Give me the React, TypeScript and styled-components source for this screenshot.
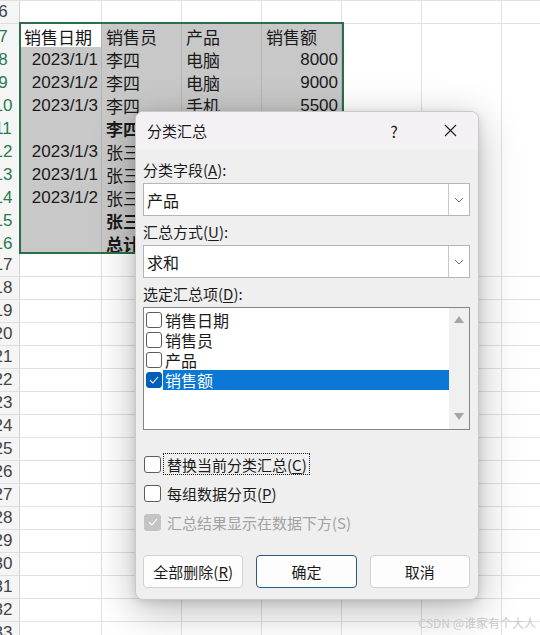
import React from 'react';
import styled, {createGlobalStyle} from 'styled-components';

const GlobalStyle = createGlobalStyle`
  html, body {
    margin: 0;
    padding: 0;
    background: #ffffff;
    overflow: hidden;
  }
`;

const CJK = `"Liberation Sans", "Noto Sans CJK SC", sans-serif`;
const UI = `"Noto Sans CJK SC", "Liberation Sans", sans-serif`;

const Page = styled.div`
  position: relative;
  width: 540px;
  height: 635px;
  overflow: hidden;
  background: #ffffff;
`;

// ---------- sheet ----------

const Sheet = styled.div`
  display: flex;
  flex-direction: column;
  margin-left: -13px;
  border-top: 1px solid #e1e1e1;
  font-family: ${CJK};
  font-size: 17px;
  color: #1a1a1a;
`;

const SheetRow = styled.div`
  display: grid;
  grid-template-columns: 33px 82px repeat(5, 80px) 60px;
  height: 23px;
`;

const RowHead = styled.div<{$active?: boolean}>`
  box-sizing: border-box;
  display: flex;
  align-items: center;
  justify-content: center;
  background: #f5f5f5;
  border-right: 1px solid #d0d0d0;
  border-bottom: 1px solid #dedede;
  color: ${(p) => (p.$active ? '#2a7a4e' : '#444444')};
  font-size: 17px;
`;

const Cell = styled.div<{$sel?: boolean; $num?: boolean; $bold?: boolean}>`
  box-sizing: border-box;
  display: flex;
  align-items: center;
  justify-content: ${(p) => (p.$num ? 'flex-end' : 'flex-start')};
  padding: 0 3px 0 4px;
  white-space: nowrap;
  overflow: visible;
  background: ${(p) => (p.$sel ? '#c8c8c8' : '#ffffff')};
  border-right: 1px solid ${(p) => (p.$sel ? '#b4b4b4' : '#e1e1e1')};
  border-bottom: 1px solid ${(p) => (p.$sel ? '#b4b4b4' : '#e1e1e1')};
  font-weight: ${(p) => (p.$bold ? 700 : 400)};
`;

const ActiveCell = styled(Cell)`
  background: #ffffff;
`;

const SelectionFrame = styled.div`
  position: absolute;
  left: 19px;
  top: 22px;
  width: 321px;
  height: 228px;
  border: 2px solid #2b6e48;
  pointer-events: none;
`;

// ---------- dialog ----------

const Dialog = styled.div`
  position: absolute;
  left: 135px;
  top: 111px;
  width: 344px;
  box-sizing: border-box;
  border: 1px solid #c9c9c9;
  border-radius: 8px;
  overflow: hidden;
  background: #efefef;
  box-shadow: 0 10px 40px rgba(0, 0, 0, 0.28), 0 2px 8px rgba(0, 0, 0, 0.12);
  font-family: ${UI};
  font-size: 15px;
  color: #1b1b1b;
`;

const TitleBar = styled.div`
  display: flex;
  align-items: center;
  height: 37px;
  padding: 0 0 0 11px;
  background: #f4f1f5;
`;

const Title = styled.div`
  flex: 1;
  font-size: 15px;
`;

const TitleButton = styled.div`
  display: flex;
  align-items: center;
  justify-content: center;
  width: 56px;
  height: 37px;
  font-size: 16px;
  color: #1b1b1b;
`;

const Body = styled.div`
  display: flex;
  flex-direction: column;
  padding: 11px 8px 11px 7px;
`;

const Field = styled.div<{$gap?: number}>`
  display: flex;
  flex-direction: column;
  gap: 3px;
  margin-top: ${(p) => p.$gap ?? 0}px;
`;

const Label = styled.div`
  height: 20px;
  line-height: 20px;
`;

const Key = styled.span`
  text-decoration: underline;
  text-underline-offset: 2px;
`;

const Combo = styled.div`
  display: flex;
  height: 33px;
  box-sizing: border-box;
  border: 1px solid #b5b5b5;
  background: #ffffff;
`;

const ComboText = styled.div`
  flex: 1;
  display: flex;
  align-items: center;
  padding-left: 3px;
  font-size: 16px;
`;

const ComboArrow = styled.div`
  width: 20px;
  display: flex;
  align-items: center;
  justify-content: center;
  border-left: 1px solid #c8c8c8;
`;

const ListBox = styled.div`
  display: flex;
  height: 123px;
  box-sizing: border-box;
  border: 1px solid #858585;
  background: #ffffff;
`;

const ListItems = styled.div`
  flex: 1;
  display: flex;
  flex-direction: column;
  padding: 2px 0 0 2px;
`;

const ListItem = styled.div`
  display: flex;
  align-items: center;
  height: 20px;
`;

const ItemText = styled.div<{$selected?: boolean}>`
  flex: 1;
  height: 20px;
  line-height: 20px;
  margin-left: 1px;
  padding-left: 2px;
  background: ${(p) => (p.$selected ? '#0a78d4' : 'transparent')};
  color: ${(p) => (p.$selected ? '#ffffff' : '#1b1b1b')};
  font-size: 16px;
`;

const ScrollBar = styled.div`
  width: 20px;
  display: flex;
  flex-direction: column;
  justify-content: space-between;
  align-items: center;
  padding: 8px 0 9px;
  background: #f0f0f0;
`;

const Box = styled.div<{$checked?: boolean; $disabled?: boolean; $size?: number}>`
  box-sizing: border-box;
  width: ${(p) => p.$size ?? 16}px;
  height: ${(p) => p.$size ?? 16}px;
  flex-shrink: 0;
  border-radius: 3px;
  display: flex;
  align-items: center;
  justify-content: center;
  border: 1px solid
    ${(p) => (p.$disabled ? '#c4c4c4' : p.$checked ? '#005fb8' : '#5c5c5c')};
  background: ${(p) => (p.$disabled ? '#c4c4c4' : p.$checked ? '#005fb8' : '#ffffff')};
`;

const CheckRow = styled.div<{$gap: number}>`
  display: flex;
  align-items: center;
  height: 22px;
  margin-top: ${(p) => p.$gap}px;
  padding-left: 1px;
`;

const CheckLabel = styled.div<{$focus?: boolean; $disabled?: boolean}>`
  margin-left: 2px;
  padding: 0 2px 0 3px;
  height: 22px;
  line-height: 22px;
  box-sizing: border-box;
  border: 1px dotted ${(p) => (p.$focus ? '#1b1b1b' : 'transparent')};
  color: ${(p) => (p.$disabled ? '#a2a2a2' : '#1b1b1b')};
`;

const Buttons = styled.div`
  display: grid;
  grid-template-columns: repeat(3, 1fr);
  gap: 13px;
  margin-top: 22px;
`;

const Button = styled.div<{$primary?: boolean}>`
  height: 33px;
  box-sizing: border-box;
  display: flex;
  align-items: center;
  justify-content: center;
  border-radius: 4px;
  background: #fdfdfd;
  border: 1px solid ${(p) => (p.$primary ? '#2c5b82' : '#d2d2d2')};
  font-size: 15px;
`;

const Watermark = styled.div`
  position: absolute;
  right: 4px;
  bottom: 4px;
  font-family: ${UI};
  font-size: 12px;
  color: #c9c9c9;
  letter-spacing: 0;
`;

// ---------- icons ----------

const Chevron = () => (
  <svg width="10" height="6" viewBox="0 0 10 6">
    <path d="M1 1 L5 5 L9 1" fill="none" stroke="#6b6b6b" strokeWidth="1" />
  </svg>
);

const Tick = ({color = '#ffffff'}: {color?: string}) => (
  <svg width="10" height="8" viewBox="0 0 10 8">
    <path d="M1 4.2 L3.8 7 L9 1" fill="none" stroke={color} strokeWidth="1.1" />
  </svg>
);

const CloseIcon = () => (
  <svg width="13" height="13" viewBox="0 0 13 13">
    <path d="M1 1 L12 12 M12 1 L1 12" stroke="#1b1b1b" strokeWidth="1.1" />
  </svg>
);

const Triangle = ({down}: {down?: boolean}) => (
  <svg width="10" height="7" viewBox="0 0 10 7">
    <path d={down ? 'M0 0 H10 L5 7 Z' : 'M0 7 H10 L5 0 Z'} fill="#a6a6a6" />
  </svg>
);

// ---------- data ----------

type Row = {n: number; a?: string; b?: string; c?: string; d?: string; bold?: boolean};

const rows: Row[] = [
  {n: 6},
  {n: 7, a: '销售日期', b: '销售员', c: '产品', d: '销售额'},
  {n: 8, a: '2023/1/1', b: '李四', c: '电脑', d: '8000'},
  {n: 9, a: '2023/1/2', b: '李四', c: '电脑', d: '9000'},
  {n: 10, a: '2023/1/3', b: '李四', c: '手机', d: '5500'},
  {n: 11, b: '李四 汇总', d: '22500', bold: true},
  {n: 12, a: '2023/1/3', b: '张三', c: '电脑', d: '7000'},
  {n: 13, a: '2023/1/1', b: '张三', c: '手机', d: '4000'},
  {n: 14, a: '2023/1/2', b: '张三', c: '手机', d: '4500'},
  {n: 15, b: '张三 汇总', d: '15500', bold: true},
  {n: 16, b: '总计', d: '38000', bold: true},
];
for (let n = 17; n <= 34; n++) rows.push({n});

const listItems = ['销售日期', '销售员', '产品', '销售额'];

const SheetView: React.FC = () => (
  <Sheet>
    {rows.map((r) => {
      const sel = r.n >= 7 && r.n <= 16;
      const isNumA = !!r.a && /\d/.test(r.a);
      return (
        <SheetRow key={r.n}>
          <RowHead $active={sel}>{r.n}</RowHead>
          {r.n === 7 ? (
            <ActiveCell $sel>{r.a}</ActiveCell>
          ) : (
            <Cell $sel={sel} $num={isNumA}>
              {r.a}
            </Cell>
          )}
          <Cell $sel={sel} $bold={r.bold}>
            {r.b}
          </Cell>
          <Cell $sel={sel}>{r.c}</Cell>
          <Cell $sel={sel} $num={r.n !== 7} $bold={r.bold}>
            {r.d}
          </Cell>
          <Cell />
          <Cell />
          <Cell />
        </SheetRow>
      );
    })}
  </Sheet>
);

const App: React.FC = () => (
  <Page>
    <GlobalStyle />
    <SheetView />
    <SelectionFrame />

    <Dialog>
      <TitleBar>
        <Title>分类汇总</Title>
        <TitleButton>?</TitleButton>
        <TitleButton>
          <CloseIcon />
        </TitleButton>
      </TitleBar>

      <Body>
        <Field>
          <Label>
            分类字段(<Key>A</Key>):
          </Label>
          <Combo>
            <ComboText>产品</ComboText>
            <ComboArrow>
              <Chevron />
            </ComboArrow>
          </Combo>
        </Field>

        <Field $gap={6}>
          <Label>
            汇总方式(<Key>U</Key>):
          </Label>
          <Combo>
            <ComboText>求和</ComboText>
            <ComboArrow>
              <Chevron />
            </ComboArrow>
          </Combo>
        </Field>

        <Field $gap={6}>
          <Label>
            选定汇总项(<Key>D</Key>):
          </Label>
          <ListBox>
            <ListItems>
              {listItems.map((item) => {
                const checked = item === '销售额';
                return (
                  <ListItem key={item}>
                    <Box $checked={checked}>{checked && <Tick />}</Box>
                    <ItemText $selected={checked}>{item}</ItemText>
                  </ListItem>
                );
              })}
            </ListItems>
            <ScrollBar>
              <Triangle />
              <Triangle down />
            </ScrollBar>
          </ListBox>
        </Field>

        <CheckRow $gap={23}>
          <Box $size={17} />
          <CheckLabel $focus>
            替换当前分类汇总(<Key>C</Key>)
          </CheckLabel>
        </CheckRow>
        <CheckRow $gap={7}>
          <Box $size={17} />
          <CheckLabel>
            每组数据分页(<Key>P</Key>)
          </CheckLabel>
        </CheckRow>
        <CheckRow $gap={7}>
          <Box $size={17} $disabled>
            <Tick />
          </Box>
          <CheckLabel $disabled>汇总结果显示在数据下方(S)</CheckLabel>
        </CheckRow>

        <Buttons>
          <Button>
            全部删除(<Key>R</Key>)
          </Button>
          <Button $primary>确定</Button>
          <Button>取消</Button>
        </Buttons>
      </Body>
    </Dialog>

    <Watermark>CSDN @谁家有个大人</Watermark>
  </Page>
);

export default App;
